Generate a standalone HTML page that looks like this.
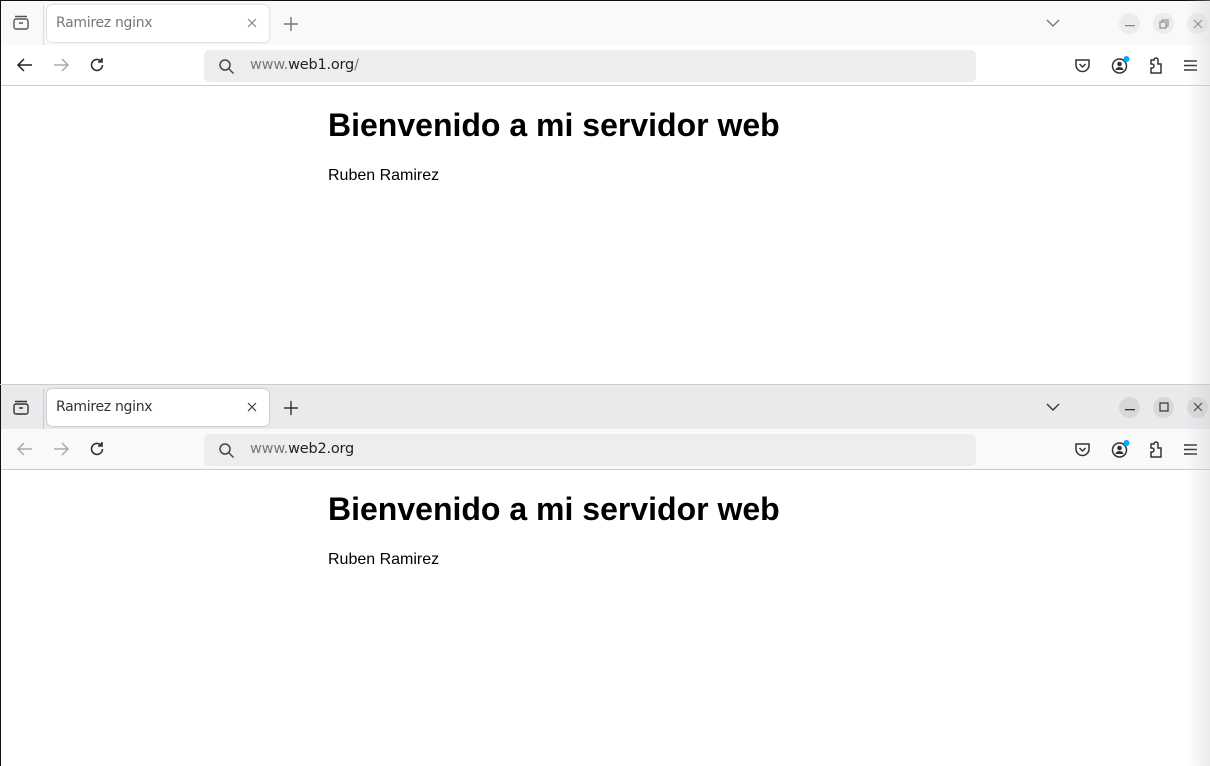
<!DOCTYPE html>
<html><head><meta charset="utf-8">
<style>
*{margin:0;padding:0;box-sizing:border-box}
body{width:1210px;height:766px;overflow:hidden;background:#fff;position:relative;font-family:"Liberation Sans",sans-serif}
.win{position:absolute;left:0;width:1210px}
.lb{position:absolute;left:0;top:0;width:1px;height:100%;background:#111;z-index:5}
.tabs{position:absolute;left:0;top:0;width:100%;height:44px}
.tb{position:absolute;left:0;top:44px;width:100%;height:41px;border-bottom:1px solid #ccc}
.tab{position:absolute;left:47px;top:4px;width:222px;height:37px;border-radius:5px;background:#fff;box-shadow:0 0 2px rgba(0,0,0,.3)}
.tab span{position:absolute;left:9px;top:10px;font-size:14px;font-family:"DejaVu Sans","Liberation Sans",sans-serif;color:#333;letter-spacing:-.3px}
.url{position:absolute;left:204px;top:5px;width:772px;height:32px;border-radius:5px;background:#ededef}
.url span{position:absolute;left:46px;top:7px;font-size:14.5px;font-family:"DejaVu Sans","Liberation Sans",sans-serif;color:#777;letter-spacing:-.2px}
.url b{font-weight:normal;color:#222}
.wb{position:absolute;top:12px;width:21px;height:21px;border-radius:50%}
.sep{position:absolute;left:43px;top:4px;width:1px;height:40px;background:#ddd}
svg{position:absolute}
h1{position:absolute;left:328px;font-size:32px;font-weight:bold;color:#000}
p{position:absolute;left:328px;font-size:16px;color:#000}
.shadow{position:absolute;right:0;top:0;width:24px;height:766px;background:linear-gradient(to right,rgba(255,255,255,0),rgba(200,200,200,.35))}
</style></head><body>

<!-- window 1 -->
<div class="win" style="top:0;height:384px;border-top:1px solid #111">
  <div class="lb"></div>
  <div class="tabs" style="background:#f9f9fb">
    <svg style="left:12px;top:13px" width="18" height="18" viewBox="0 0 18 18" fill="none" stroke="#555" stroke-width="1.4"><rect x="2" y="5" width="14" height="10" rx="2"/><path d="M3 2.5h12M7 9h4"/></svg>
    <div class="sep"></div>
    <div class="tab" style="box-shadow:0 0 2px rgba(0,0,0,.25)"><span style="color:#777">Ramirez nginx</span>
      <svg style="left:200px;top:13px" width="10" height="10" viewBox="0 0 10 10" stroke="#888" stroke-width="1.2"><path d="M1 1l8 8M9 1l-8 8"/></svg></div>
    <svg style="left:284px;top:16px" width="14" height="14" viewBox="0 0 14 14" stroke="#777" stroke-width="1.4"><path d="M7 0v14M0 7h14"/></svg>
    <svg style="left:1046px;top:18px" width="14" height="8" viewBox="0 0 14 8" fill="none" stroke="#777" stroke-width="1.4"><path d="M1 1l6 6 6-6"/></svg>
    <div class="wb" style="left:1119px;background:#ececee"></div>
    <svg style="left:1125px;top:24px" width="10" height="2"><rect width="10" height="1.3" fill="#888"/></svg>
    <div class="wb" style="left:1153px;background:#ececee"></div>
    <svg style="left:1159px;top:18px" width="10" height="10" viewBox="0 0 10 10" fill="none" stroke="#888" stroke-width="1.1"><rect x="1" y="3" width="6" height="6"/><path d="M3 3V1h6v6H7"/></svg>
    <div class="wb" style="left:1187px;background:#ececee"></div>
    <svg style="left:1193px;top:18px" width="10" height="10" viewBox="0 0 10 10" stroke="#888" stroke-width="1.2"><path d="M1 1l8 8M9 1l-8 8"/></svg>
  </div>
  <div class="tb" style="background:#fff">
    <svg style="left:16px;top:12px" width="18" height="16" viewBox="0 0 18 16" fill="none" stroke="#222" stroke-width="1.5"><path d="M16 8H2M8 2L2 8l6 6"/></svg>
    <svg style="left:52px;top:12px" width="18" height="16" viewBox="0 0 18 16" fill="none" stroke="#aaa" stroke-width="1.5"><path d="M2 8h14M10 2l6 6-6 6"/></svg>
    <svg style="left:88px;top:11px" width="18" height="18" viewBox="0 0 18 18" fill="none" stroke="#333" stroke-width="1.6"><path d="M14.5 9a5.5 5.5 0 1 1-2-4.3"/><path d="M14 2v4h-4" fill="#333"/></svg>
    <div class="url"><svg style="left:14px;top:8px" width="17" height="17" viewBox="0 0 17 17" fill="none" stroke="#444" stroke-width="1.5"><circle cx="7" cy="7" r="5"/><path d="M11 11l4.5 4.5"/></svg><span>www.<b>web1.org</b>/</span></div>
    <svg style="left:1074px;top:13px" width="17" height="16" viewBox="0 0 17 16" fill="none" stroke="#333" stroke-width="1.5"><path d="M2 2h13v5a6.5 6.5 0 0 1-13 0z"/><path d="M5.5 6l3 3 3-3"/></svg>
    <svg style="left:1110px;top:9px" width="22" height="22" viewBox="0 0 22 22"><circle cx="9.5" cy="12" r="7" fill="none" stroke="#333" stroke-width="1.5"/><circle cx="9.5" cy="10" r="2.3" fill="#333"/><path d="M5.5 16a4 3 0 0 1 8 0" fill="#333"/><circle cx="16.5" cy="5" r="3" fill="#0af"/></svg>
    <svg style="left:1147px;top:11px" width="18" height="19" viewBox="0 0 18 19" fill="none" stroke="#333" stroke-width="1.5"><path d="M4 17h10V8h-3V4a2 2 0 0 0-4 0v0H4v4h1a2 2 0 0 1 0 4H4z"/></svg>
    <svg style="left:1183px;top:14px" width="15" height="13" viewBox="0 0 15 13" stroke="#333" stroke-width="1.5"><path d="M1 2h13M1 6.5h13M1 11h13"/></svg>
  </div>
  <h1 style="top:106px">Bienvenido a mi servidor web</h1>
  <p style="top:166px">Ruben Ramirez</p>
</div>

<!-- window 2 -->
<div class="win" style="top:384px;height:382px;border-top:1px solid #ccc">
  <div class="lb"></div>
  <div class="tabs" style="background:#eaeaed">
    <svg style="left:12px;top:14px" width="18" height="18" viewBox="0 0 18 18" fill="none" stroke="#333" stroke-width="1.4"><rect x="2" y="5" width="14" height="10" rx="2"/><path d="M3 2.5h12M7 9h4"/></svg>
    <div class="sep" style="background:#ccc"></div>
    <div class="tab"><span>Ramirez nginx</span>
      <svg style="left:200px;top:13px" width="10" height="10" viewBox="0 0 10 10" stroke="#444" stroke-width="1.2"><path d="M1 1l8 8M9 1l-8 8"/></svg></div>
    <svg style="left:284px;top:16px" width="14" height="14" viewBox="0 0 14 14" stroke="#333" stroke-width="1.4"><path d="M7 0v14M0 7h14"/></svg>
    <svg style="left:1046px;top:18px" width="14" height="8" viewBox="0 0 14 8" fill="none" stroke="#333" stroke-width="1.4"><path d="M1 1l6 6 6-6"/></svg>
    <div class="wb" style="left:1119px;background:#d8d8da"></div>
    <svg style="left:1125px;top:24px" width="10" height="2"><rect width="10" height="1.3" fill="#333"/></svg>
    <div class="wb" style="left:1153px;background:#d8d8da"></div>
    <svg style="left:1159px;top:17px" width="10" height="10" viewBox="0 0 10 10" fill="none" stroke="#333" stroke-width="1.2"><rect x="1" y="1" width="8" height="8"/></svg>
    <div class="wb" style="left:1187px;background:#d8d8da"></div>
    <svg style="left:1193px;top:17px" width="10" height="10" viewBox="0 0 10 10" stroke="#333" stroke-width="1.2"><path d="M1 1l8 8M9 1l-8 8"/></svg>
  </div>
  <div class="tb" style="background:#f9f9fb">
    <svg style="left:16px;top:12px" width="18" height="16" viewBox="0 0 18 16" fill="none" stroke="#aaa" stroke-width="1.5"><path d="M16 8H2M8 2L2 8l6 6"/></svg>
    <svg style="left:52px;top:12px" width="18" height="16" viewBox="0 0 18 16" fill="none" stroke="#aaa" stroke-width="1.5"><path d="M2 8h14M10 2l6 6-6 6"/></svg>
    <svg style="left:88px;top:11px" width="18" height="18" viewBox="0 0 18 18" fill="none" stroke="#333" stroke-width="1.6"><path d="M14.5 9a5.5 5.5 0 1 1-2-4.3"/><path d="M14 2v4h-4" fill="#333"/></svg>
    <div class="url"><svg style="left:14px;top:8px" width="17" height="17" viewBox="0 0 17 17" fill="none" stroke="#444" stroke-width="1.5"><circle cx="7" cy="7" r="5"/><path d="M11 11l4.5 4.5"/></svg><span>www.<b>web2.org</b></span></div>
    <svg style="left:1074px;top:13px" width="17" height="16" viewBox="0 0 17 16" fill="none" stroke="#333" stroke-width="1.5"><path d="M2 2h13v5a6.5 6.5 0 0 1-13 0z"/><path d="M5.5 6l3 3 3-3"/></svg>
    <svg style="left:1110px;top:9px" width="22" height="22" viewBox="0 0 22 22"><circle cx="9.5" cy="12" r="7" fill="none" stroke="#333" stroke-width="1.5"/><circle cx="9.5" cy="10" r="2.3" fill="#333"/><path d="M5.5 16a4 3 0 0 1 8 0" fill="#333"/><circle cx="16.5" cy="5" r="3" fill="#0af"/></svg>
    <svg style="left:1147px;top:11px" width="18" height="19" viewBox="0 0 18 19" fill="none" stroke="#333" stroke-width="1.5"><path d="M4 17h10V8h-3V4a2 2 0 0 0-4 0v0H4v4h1a2 2 0 0 1 0 4H4z"/></svg>
    <svg style="left:1183px;top:14px" width="15" height="13" viewBox="0 0 15 13" stroke="#333" stroke-width="1.5"><path d="M1 2h13M1 6.5h13M1 11h13"/></svg>
  </div>
  <h1 style="top:106px">Bienvenido a mi servidor web</h1>
  <p style="top:166px">Ruben Ramirez</p>
</div>
<div class="shadow"></div>
</body></html>
